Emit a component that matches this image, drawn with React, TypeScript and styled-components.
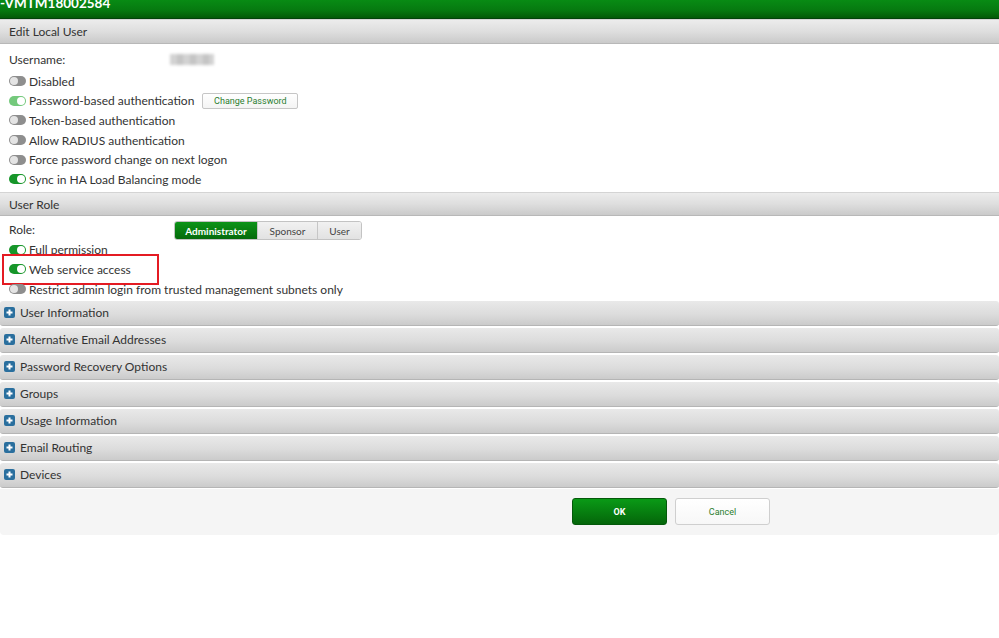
import React from "react";
import styled, { createGlobalStyle, css } from "styled-components";

const GlobalStyle = createGlobalStyle`
  html, body { margin: 0; padding: 0; background: #ffffff; }
  body { font-family: Lato, "Open Sans", Arial, sans-serif; color: #333; }
  * { box-sizing: border-box; }
`;

const Page = styled.div`
  width: 999px;
  display: flex;
  flex-direction: column;
`;

const TitleBar = styled.div`
  height: 19px;
  overflow: hidden;
  display: flex;
  align-items: flex-end;
  padding-bottom: 8px;
  background: linear-gradient(#088b14 0%, #067a10 55%, #035a08 100%);
  border-bottom: 1px solid #02420a;
`;

const TitleText = styled.span`
  color: #ffffff;
  font-size: 13.5px;
  line-height: 13px;
  font-weight: 700;
  white-space: nowrap;
`;

const SectionHeader = styled.div<{ $h: number }>`
  height: ${(p) => p.$h}px;
  display: flex;
  align-items: center;
  padding-left: 9px;
  font-size: 12px;
  color: #333;
  background: linear-gradient(#ececec 0%, #dedede 50%, #cacaca 100%);
  border-top: 1px solid #d4d4d4;
  border-bottom: 1px solid #b8b8b8;
`;

const Body = styled.div<{ $pb: number }>`
  display: flex;
  flex-direction: column;
  padding: 3px 0 ${(p) => p.$pb}px 9px;
`;

const FieldRow = styled.div<{ $h?: number }>`
  height: ${(p) => p.$h ?? 19.6}px;
  display: flex;
  align-items: center;
  position: relative;
  font-size: 12px;
  color: #333;
  white-space: nowrap;
`;

const Label = styled.span`
  width: 165px;
  flex: none;
`;

const Blurred = styled.span`
  display: inline-block;
  width: 44px;
  height: 11px;
  margin-left: -4px;
  background: repeating-linear-gradient(90deg, #d2d2d2 0 7px, #c4c4c4 7px 13px);
  filter: blur(1.5px);
`;

const Track = styled.span<{ $on: boolean; $muted?: boolean }>`
  width: 17px;
  height: 10px;
  border-radius: 5px;
  flex: none;
  margin-right: 3px;
  position: relative;
  background: ${(p) => (p.$on ? (p.$muted ? "#74c97c" : "#17962a") : "#8e8e8e")};
`;

const Knob = styled.span<{ $on: boolean }>`
  position: absolute;
  top: 1px;
  width: 8px;
  height: 8px;
  border-radius: 50%;
  background: #ffffff;
  ${(p) => (p.$on ? css`right: 1px;` : css`left: 1px; background: #e4e4e4;`)}
`;

const SmallButton = styled.button`
  margin-left: 8px;
  height: 16px;
  width: 96px;
  padding: 0;
  border: 1px solid #c6c6c6;
  border-radius: 2px;
  background: linear-gradient(#ffffff, #f4f4f4);
  color: #2b7d2f;
  font-family: Roboto, Arial, sans-serif;
  font-size: 9px;
`;

const Segmented = styled.div`
  display: flex;
  height: 19px;
  border: 1px solid #c3c3c3;
  border-radius: 3px;
  overflow: hidden;
  margin-top: 2px;
`;

const Segment = styled.span<{ $active?: boolean; $w: number }>`
  width: ${(p) => p.$w}px;
  display: flex;
  align-items: center;
  justify-content: center;
  font-size: 10px;
  font-family: Lato, Arial, sans-serif;
  ${(p) =>
    p.$active
      ? css`
          background: linear-gradient(#0c9418, #056a0b);
          color: #fff;
          font-weight: 700;
        `
      : css`
          background: linear-gradient(#f1f1f1, #e2e2e2);
          color: #444;
          border-left: 1px solid #c6c6c6;
        `}
`;

const Highlight = styled.span`
  position: absolute;
  left: -7px;
  top: -6px;
  width: 157px;
  height: 31px;
  border: 2px solid #e41b23;
  pointer-events: none;
`;

const Collapsibles = styled.div`
  display: flex;
  flex-direction: column;
  gap: 2px;
`;

const CollapseHeader = styled.div`
  height: 25px;
  display: flex;
  align-items: center;
  gap: 5px;
  padding-left: 4px;
  font-size: 12px;
  color: #333;
  border-radius: 3px;
  background: linear-gradient(#e9e9e9 0%, #dcdcdc 55%, #cbcbcb 100%);
  border-bottom: 1px solid #b5b5b5;
`;

const Footer = styled.div`
  margin-top: 1px;
  height: 46px;
  display: flex;
  align-items: center;
  gap: 8px;
  padding-left: 572px;
  background: #f5f5f5;
  border-radius: 0 0 4px 4px;
`;

const FooterButton = styled.button<{ $primary?: boolean }>`
  width: 95px;
  height: 27px;
  border-radius: 3px;
  font-family: Roboto, Arial, sans-serif;
  font-size: 9px;
  padding: 0;
  ${(p) =>
    p.$primary
      ? css`
          background: linear-gradient(#0a9a16, #04660a);
          border: 1px solid #04590a;
          color: #fff;
          font-weight: 700;
        `
      : css`
          background: linear-gradient(#ffffff, #f7f7f7);
          border: 1px solid #cfcfcf;
          color: #2b7d2f;
        `}
`;

const Toggle = ({ on, muted }: { on: boolean; muted?: boolean }) => (
  <Track $on={on} $muted={muted}>
    <Knob $on={on} />
  </Track>
);

const PlusIcon = () => (
  <svg width="11" height="11" viewBox="0 0 11 11">
    <rect x="0" y="0" width="11" height="11" rx="2" fill="#2a6f9e" />
    <rect x="2.5" y="4.5" width="6" height="2" fill="#fff" />
    <rect x="4.5" y="2.5" width="2" height="6" fill="#fff" />
  </svg>
);

const toggles1: { label: string; on: boolean; muted?: boolean; extra?: boolean }[] = [
  { label: "Disabled", on: false },
  { label: "Password-based authentication", on: true, muted: true, extra: true },
  { label: "Token-based authentication", on: false },
  { label: "Allow RADIUS authentication", on: false },
  { label: "Force password change on next logon", on: false },
  { label: "Sync in HA Load Balancing mode", on: true },
];

const sections = [
  "User Information",
  "Alternative Email Addresses",
  "Password Recovery Options",
  "Groups",
  "Usage Information",
  "Email Routing",
  "Devices",
];

export default function App() {
  return (
    <Page>
      <GlobalStyle />
      <TitleBar>
        <TitleText>-VMTM18002584</TitleText>
      </TitleBar>
      <SectionHeader $h={25}>Edit Local User</SectionHeader>
      <Body $pb={3}>
        <FieldRow $h={24.5}>
          <Label>Username:</Label>
          <Blurred />
        </FieldRow>
        {toggles1.map((t) => (
          <FieldRow key={t.label}>
            <Toggle on={t.on} muted={t.muted} />
            {t.label}
            {t.extra && <SmallButton>Change Password</SmallButton>}
          </FieldRow>
        ))}
      </Body>
      <SectionHeader $h={24}>User Role</SectionHeader>
      <Body $pb={2}>
        <FieldRow $h={21}>
          <Label>Role:</Label>
          <Segmented>
            <Segment $active $w={82}>Administrator</Segment>
            <Segment $w={60}>Sponsor</Segment>
            <Segment $w={44}>User</Segment>
          </Segmented>
        </FieldRow>
        <FieldRow>
          <Toggle on />
          Full permission
        </FieldRow>
        <FieldRow>
          <Toggle on />
          Web service access
          <Highlight />
        </FieldRow>
        <FieldRow>
          <Toggle on={false} />
          Restrict admin login from trusted management subnets only
        </FieldRow>
      </Body>
      <Collapsibles>
        {sections.map((s) => (
          <CollapseHeader key={s}>
            <PlusIcon />
            {s}
          </CollapseHeader>
        ))}
      </Collapsibles>
      <Footer>
        <FooterButton $primary>OK</FooterButton>
        <FooterButton>Cancel</FooterButton>
      </Footer>
    </Page>
  );
}
